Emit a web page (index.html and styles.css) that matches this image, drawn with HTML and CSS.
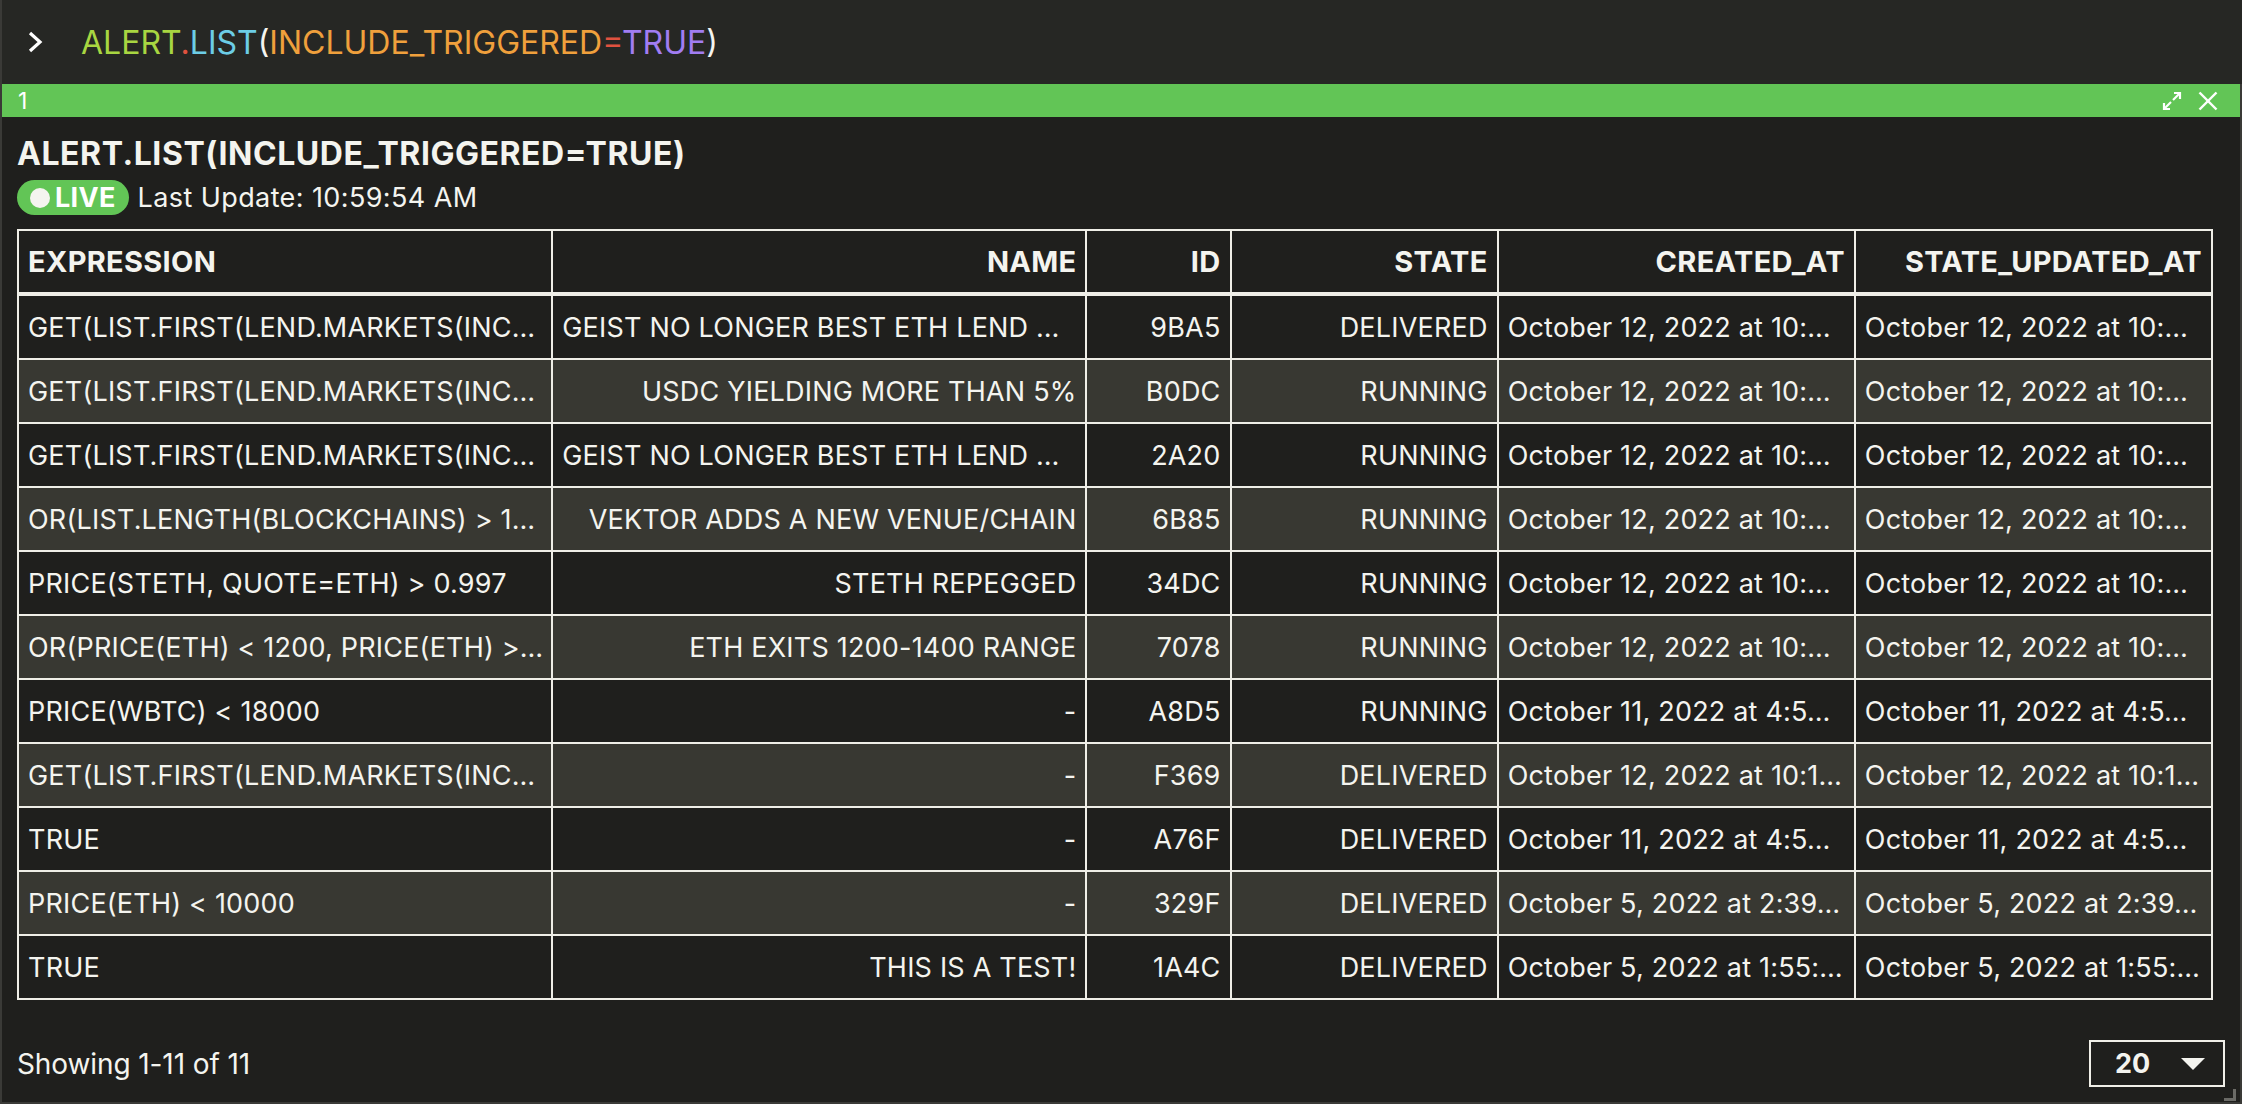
FILE: index.html
```html
<!DOCTYPE html>
<html>
<head>
<meta charset="utf-8">
<link rel="stylesheet" href="styles.css">
</head>
<body>
<div class="cmdbar">
  <svg class="chev" width="18" height="24" viewBox="0 0 18 24"><polyline points="3,3 13,12 3,21" fill="none" stroke="#fff" stroke-width="3.2"/></svg>
  <div class="cmd"><span class="c-green">ALERT</span><span class="c-red">.</span><span class="c-cyan">LIST</span><span class="c-white">(</span><span class="c-orange">INCLUDE_TRIGGERED</span><span class="c-red">=</span><span class="c-purple">TRUE</span><span class="c-white">)</span></div>
</div>
<div class="panel">
  <div class="panel-head">
    <span class="tab-num">1</span>
    <div class="head-icons">
      <svg width="20" height="20" viewBox="0 0 20 20"><g fill="none" stroke="#fff" stroke-width="2.2"><line x1="11" y1="9" x2="18" y2="2"/><polyline points="12,2 18,2 18,8"/><line x1="9" y1="11" x2="2" y2="18"/><polyline points="2,12 2,18 8,18"/></g></svg>
      <svg width="20" height="20" viewBox="0 0 20 20"><g fill="none" stroke="#fff" stroke-width="2.4"><line x1="1.5" y1="1.5" x2="18.5" y2="18.5"/><line x1="18.5" y1="1.5" x2="1.5" y2="18.5"/></g></svg>
    </div>
  </div>
  <div class="panel-body">
    <h1 class="title">ALERT.LIST(INCLUDE_TRIGGERED=TRUE)</h1>
    <div class="status">
      <span class="live"><span class="dot"></span>LIVE</span>
      <span class="updated">Last Update: 10:59:54 AM</span>
    </div>
    <div class="table-wrap">
    <table class="grid">
      <colgroup>
        <col class="w-expr"><col class="w-name"><col class="w-id"><col class="w-state"><col class="w-date"><col class="w-date">
      </colgroup>
      <thead>
        <tr><th class="left">EXPRESSION</th><th>NAME</th><th>ID</th><th>STATE</th><th>CREATED_AT</th><th>STATE_UPDATED_AT</th></tr>
      </thead>
      <tbody>
        <tr><td class="left">GET(LIST.FIRST(LEND.MARKETS(INC…</td><td class="left">GEIST NO LONGER BEST ETH LEND …</td><td>9BA5</td><td>DELIVERED</td><td class="left">October 12, 2022 at 10:…</td><td class="left">October 12, 2022 at 10:…</td></tr>
        <tr><td class="left">GET(LIST.FIRST(LEND.MARKETS(INC…</td><td>USDC YIELDING MORE THAN 5%</td><td>B0DC</td><td>RUNNING</td><td class="left">October 12, 2022 at 10:…</td><td class="left">October 12, 2022 at 10:…</td></tr>
        <tr><td class="left">GET(LIST.FIRST(LEND.MARKETS(INC…</td><td class="left">GEIST NO LONGER BEST ETH LEND …</td><td>2A20</td><td>RUNNING</td><td class="left">October 12, 2022 at 10:…</td><td class="left">October 12, 2022 at 10:…</td></tr>
        <tr><td class="left">OR(LIST.LENGTH(BLOCKCHAINS) &gt; 1…</td><td>VEKTOR ADDS A NEW VENUE/CHAIN</td><td>6B85</td><td>RUNNING</td><td class="left">October 12, 2022 at 10:…</td><td class="left">October 12, 2022 at 10:…</td></tr>
        <tr><td class="left">PRICE(STETH, QUOTE=ETH) &gt; 0.997</td><td>STETH REPEGGED</td><td>34DC</td><td>RUNNING</td><td class="left">October 12, 2022 at 10:…</td><td class="left">October 12, 2022 at 10:…</td></tr>
        <tr><td class="left">OR(PRICE(ETH) &lt; 1200, PRICE(ETH) &gt;…</td><td>ETH EXITS 1200-1400 RANGE</td><td>7078</td><td>RUNNING</td><td class="left">October 12, 2022 at 10:…</td><td class="left">October 12, 2022 at 10:…</td></tr>
        <tr><td class="left">PRICE(WBTC) &lt; 18000</td><td>-</td><td>A8D5</td><td>RUNNING</td><td class="left">October 11, 2022 at 4:5…</td><td class="left">October 11, 2022 at 4:5…</td></tr>
        <tr><td class="left">GET(LIST.FIRST(LEND.MARKETS(INC…</td><td>-</td><td>F369</td><td>DELIVERED</td><td class="left">October 12, 2022 at 10:1…</td><td class="left">October 12, 2022 at 10:1…</td></tr>
        <tr><td class="left">TRUE</td><td>-</td><td>A76F</td><td>DELIVERED</td><td class="left">October 11, 2022 at 4:5…</td><td class="left">October 11, 2022 at 4:5…</td></tr>
        <tr><td class="left">PRICE(ETH) &lt; 10000</td><td>-</td><td>329F</td><td>DELIVERED</td><td class="left">October 5, 2022 at 2:39…</td><td class="left">October 5, 2022 at 2:39…</td></tr>
        <tr><td class="left">TRUE</td><td>THIS IS A TEST!</td><td>1A4C</td><td>DELIVERED</td><td class="left">October 5, 2022 at 1:55:…</td><td class="left">October 5, 2022 at 1:55:…</td></tr>
      </tbody>
    </table>
    </div>
    <div class="footer">
      <span class="showing">Showing 1-11 of 11</span>
      <div class="pager"><span class="pager-val">20</span><span class="caret"></span></div>
    </div>
  </div>
  <span class="resize"></span>
</div>
</body>
</html>
```

FILE: styles.css
```css
html, body {
  margin: 0;
  padding: 0;
}
body {
  width: 2242px;
  height: 1104px;
  background: #262724;
  font-family: Inter, "Noto Sans", sans-serif;
  color: #f4f4ef;
  overflow: hidden;
  display: flex;
  flex-direction: column;
}
.cmdbar {
  height: 84px;
  flex: none;
  display: flex;
  align-items: center;
  padding-left: 25px;
  gap: 36px;
  border-left: 2px solid #3a3a37;
  box-sizing: border-box;
}
.chev { flex: none; }
.cmd {
  font-size: 32px;
  letter-spacing: 0;
}
.c-green { color: #a8d641; }
.c-red { color: #e0523f; }
.c-cyan { color: #6ccde6; }
.c-white { color: #f4f4f0; }
.c-orange { color: #f0a03c; }
.c-purple { color: #a17df2; }

.panel {
  flex: 1;
  position: relative;
  background: #1f1f1d;
  border: 2px solid #3a3a37;
  border-top: 0;
  display: flex;
  flex-direction: column;
}
.panel-head {
  height: 33px;
  background: #62c556;
  display: flex;
  align-items: center;
  justify-content: space-between;
  padding: 0 22px 0 16px;
}
.tab-num {
  font-size: 23px;
  color: #fff;
}
.head-icons {
  display: flex;
  gap: 16px;
  align-items: center;
}
.panel-body {
  padding: 0 15px;
  display: flex;
  flex-direction: column;
}
.title {
  margin: 19px 0 0;
  font-size: 32px;
  font-weight: 700;
  line-height: 36px;
  letter-spacing: 0.55px;
}
.status {
  margin-top: 8px;
  display: flex;
  align-items: center;
  gap: 9px;
}
.live {
  display: inline-flex;
  align-items: center;
  gap: 5px;
  height: 35px;
  padding: 0 13px 0 13px;
  border-radius: 18px;
  background: #62c556;
  color: #fff;
  font-weight: 700;
  font-size: 27px;
  letter-spacing: 0.3px;
}
.dot {
  width: 20px;
  height: 20px;
  border-radius: 50%;
  background: #f4f4ef;
}
.updated {
  font-size: 27px;
  letter-spacing: 0.4px;
}
.table-wrap {
  margin-top: 14px;
  padding-right: 12px;
}
.grid {
  width: 100%;
  border-collapse: collapse;
  table-layout: fixed;
  font-size: 27px;
  letter-spacing: 0.2px;
}
.w-expr, .w-name { width: 534px; }
.w-id { width: 144px; }
.w-state { width: 267px; }
.w-date { width: 357px; }
.grid th, .grid td {
  border: 2px solid #efeee7;
  padding: 0 9px;
  text-align: right;
  white-space: nowrap;
  overflow: hidden;
}
.grid th {
  height: 61px;
  font-weight: 700;
  font-size: 29px;
  border-bottom-width: 4px;
  letter-spacing: 0.3px;
}
.grid td {
  height: 62px;
}
.grid .left { text-align: left; padding-right: 2px; }
.grid tbody tr:nth-child(even) td { background: #383832; }

.footer {
  margin-top: 40px;
  display: flex;
  align-items: center;
  justify-content: space-between;
}
.showing {
  font-size: 28px;
  letter-spacing: -0.1px;
}
.pager {
  width: 136px;
  height: 47px;
  box-sizing: border-box;
  border: 2px solid #f0efe8;
  display: flex;
  align-items: center;
  padding: 0 18px 0 24px;
  justify-content: space-between;
}
.pager-val {
  font-size: 27px;
  font-weight: 700;
}
.caret {
  width: 0;
  height: 0;
  border-left: 12px solid transparent;
  border-right: 12px solid transparent;
  border-top: 12px solid #f4f4ef;
}
.resize {
  position: absolute;
  right: 4px;
  bottom: 1px;
  width: 9px;
  height: 9px;
  border-right: 3px solid #6a6a66;
  border-bottom: 3px solid #6a6a66;
}
```
